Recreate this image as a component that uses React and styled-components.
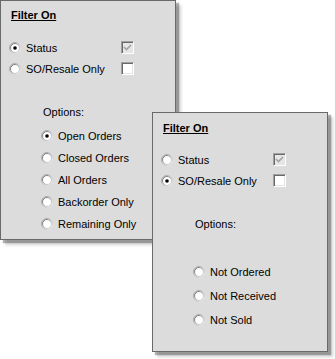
import React from "react";
import styled, { createGlobalStyle } from "styled-components";

const Global = createGlobalStyle`
  html, body { margin: 0; padding: 0; background: #ffffff; }
  body { font-family: "Liberation Sans", Arial, sans-serif; }
`;

const Canvas = styled.div`
  position: relative;
  width: 335px;
  height: 359px;
  overflow: hidden;
  background: #ffffff;
`;

const Panel = styled.div`
  position: absolute;
  left: ${(p) => p.$left}px;
  top: ${(p) => p.$top}px;
  width: 174px;
  height: 238px;
  background: #dcdcdc;
  border: 1px solid #6a6a6a;
  box-shadow: 3px 3px 1px rgba(0, 0, 0, 0.28), 5px 5px 3px rgba(0, 0, 0, 0.18);
  display: flex;
  flex-direction: column;
  font-size: 11px;
  color: #000;
`;

const Title = styled.div`
  margin: ${(p) => p.$top}px 0 0 10px;
  height: 13px;
  line-height: 13px;
  font-weight: bold;
  text-decoration: underline;
  text-underline-offset: 1px;
`;

const FilterGrid = styled.div`
  margin-top: ${(p) => p.$gap}px;
  padding-left: 8px;
  display: grid;
  grid-template-columns: 112px 13px;
  grid-auto-rows: 21px;
  align-items: center;
`;

const OptionsLabel = styled.div`
  margin: ${(p) => p.$gap}px 0 0 42px;
  height: 13px;
  line-height: 13px;
`;

const OptionList = styled.div`
  margin-top: ${(p) => p.$gap}px;
  padding-left: 40px;
  display: grid;
  grid-auto-rows: ${(p) => p.$row}px;
  align-items: center;
`;

const RadioRow = styled.label`
  display: flex;
  align-items: center;
  gap: 5px;
  height: 100%;
  white-space: nowrap;
`;

const RadioSvg = styled.svg`
  width: 12px;
  height: 12px;
  flex: none;
  display: block;
`;

const Check = styled.div`
  width: 11px;
  height: 11px;
  border-top: 1px solid #a0a0a0;
  border-left: 1px solid #a0a0a0;
  border-bottom: 1px solid #ffffff;
  border-right: 1px solid #ffffff;
  box-shadow: inset 1px 1px 0 #696969, inset -1px -1px 0 #e3e3e3;
  background: ${(p) => (p.$disabled ? "#e6e6e6" : "#ffffff")};
  display: flex;
  align-items: center;
  justify-content: center;
`;

function Radio({ checked, id }) {
  return (
    <RadioSvg viewBox="0 0 12 12">
      <defs>
        <linearGradient id={`o${id}`} x1="0" y1="0" x2="1" y2="1">
          <stop offset="0" stopColor="#9a9a9a" />
          <stop offset="0.55" stopColor="#c8c8c8" />
          <stop offset="1" stopColor="#f4f4f4" />
        </linearGradient>
        <linearGradient id={`i${id}`} x1="0" y1="0" x2="1" y2="1">
          <stop offset="0" stopColor="#5a5a5a" />
          <stop offset="0.5" stopColor="#b0b0b0" />
          <stop offset="1" stopColor="#e0e0e0" />
        </linearGradient>
      </defs>
      <circle cx="6" cy="6" r="5.5" fill="none" stroke={`url(#o${id})`} strokeWidth="1" />
      <circle cx="6" cy="6" r="4.5" fill="#ffffff" stroke={`url(#i${id})`} strokeWidth="1" />
      {checked && <circle cx="6" cy="6" r="1.8" fill="#000" />}
    </RadioSvg>
  );
}

function CheckMark() {
  return (
    <svg width="9" height="9" viewBox="0 0 9 9">
      <path d="M1 4 L3.5 6.5 L8 2" fill="none" stroke="#a3a3a3" strokeWidth="1.6" />
    </svg>
  );
}

function FilterPanel({ left, top, pid, filter, options, titleTop, gap, row }) {
  return (
    <Panel $left={left} $top={top}>
      <Title $top={titleTop}>Filter On</Title>
      <FilterGrid $gap={23 - titleTop}>
        <RadioRow>
          <Radio id={`${pid}s`} checked={filter === "status"} />
          Status
        </RadioRow>
        <Check $disabled>
          <CheckMark />
        </Check>
        <RadioRow>
          <Radio id={`${pid}r`} checked={filter === "so"} />
          SO/Resale Only
        </RadioRow>
        <Check />
      </FilterGrid>
      <OptionsLabel $gap={27}>Options:</OptionsLabel>
      <OptionList $gap={gap} $row={row}>
        {options.map((o, i) => (
          <RadioRow key={o.label}>
            <Radio id={`${pid}o${i}`} checked={o.checked} />
            {o.label}
          </RadioRow>
        ))}
      </OptionList>
    </Panel>
  );
}

export default function App() {
  return (
    <>
      <Global />
      <Canvas>
        <FilterPanel
          pid="a"
          left={0}
          top={0}
          titleTop={8}
          filter="status"
          gap={6}
          row={22}
          options={[
            { label: "Open Orders", checked: true },
            { label: "Closed Orders" },
            { label: "All Orders" },
            { label: "Backorder Only" },
            { label: "Remaining Only" },
          ]}
        />
        <FilterPanel
          pid="b"
          left={152}
          top={112}
          titleTop={9}
          filter="so"
          gap={29}
          row={24}
          options={[
            { label: "Not Ordered" },
            { label: "Not Received" },
            { label: "Not Sold" },
          ]}
        />
      </Canvas>
    </>
  );
}
